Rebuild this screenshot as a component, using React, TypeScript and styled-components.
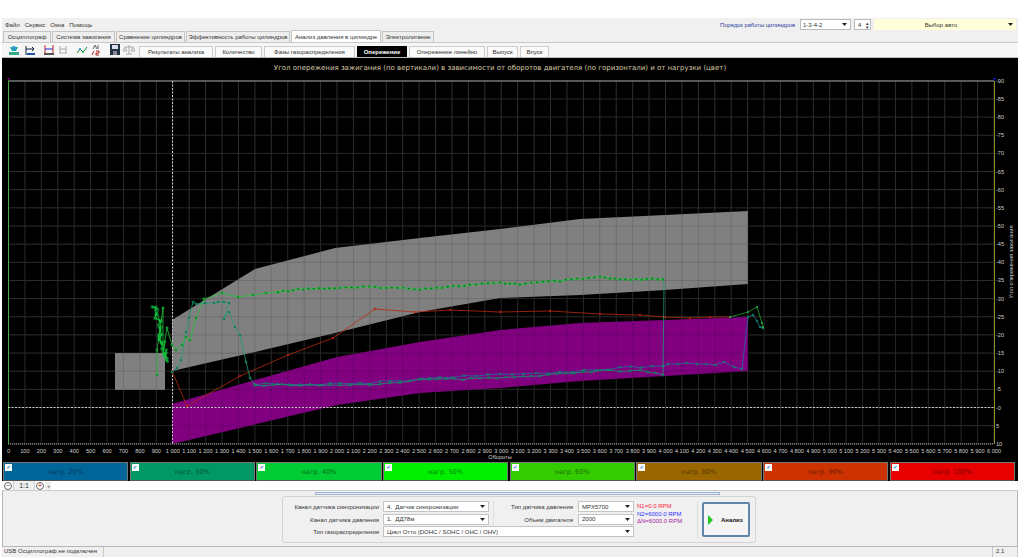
import React from "react";
import styled, { createGlobalStyle } from "styled-components";

const UI_FONT = '"Liberation Sans", Arial, sans-serif';
const WIDE_FONT = '"DejaVu Sans", Verdana, sans-serif';

// chart helpers: page coordinates are used as the svg coordinates
const xOf = (rpm: number) => 8.5 + rpm * 0.16425;
const yOf = (deg: number) => 407.5 - deg * 3.63;

type Pt = [number, number];

const toPoints = (pts: Pt[]) => pts.map((p) => p.join(",")).join(" ");

const noise = (i: number) => {
  const v = Math.sin(i * 12.9898) * 43758.5453;
  return v - Math.floor(v);
};

const interpolate = (keys: Pt[], step: number, jitter: number, seed: number) => {
  const out: Pt[] = [];
  for (let k = 0; k < keys.length - 1; k++) {
    const [x0, y0] = keys[k];
    const [x1, y1] = keys[k + 1];
    const n = Math.max(1, Math.round((x1 - x0) / step));
    for (let i = 0; i < n; i++) {
      const t = i / n;
      out.push([
        +(x0 + (x1 - x0) * t).toFixed(1),
        +(y0 + (y1 - y0) * t + (noise(seed + out.length) - 0.5) * jitter).toFixed(1),
      ]);
    }
  }
  out.push(keys[keys.length - 1]);
  return out;
};

const tangle: Pt[] = Array.from({ length: 46 }, (_, i) => [
  +(152 + i * 0.24 + noise(i) * 6).toFixed(1),
  +(308 + i * 1.2 + (noise(i + 70) - 0.5) * 10).toFixed(1),
]);

const greenHead: Pt[] = [
  [157, 375], [157, 350], [163, 308], [163, 352], [167, 328], [172, 345], [176, 350],
  [182, 345], [186, 337], [190, 340], [196, 318], [204, 299], [222, 293], [238, 297],
  [253, 295], [266, 293], [278, 292],
];
const greenTail = interpolate(
  [[278, 292], [298, 289], [340, 288], [375, 287], [420, 289], [470, 285], [500, 283], [520, 284], [560, 281], [600, 277], [620, 280], [663, 279]],
  5.5, 1.6, 11
);
const tealHead: Pt[] = [
  [172, 372], [177, 368], [181, 360], [186, 332], [189, 318], [193, 302], [196, 304],
  [205, 303], [214, 303], [218, 302], [224, 302], [229, 303], [224, 319], [229, 312],
  [235, 327], [240, 335], [246, 362], [250, 378], [255, 385],
];
const tealTail = interpolate(
  [[255, 385], [300, 385], [340, 386], [380, 384], [420, 380], [480, 379], [540, 376], [600, 371], [640, 371], [663, 375]],
  9, 2, 40
);
const blueTail = interpolate(
  [[255, 384], [300, 384], [350, 384], [400, 381], [440, 377], [500, 375], [560, 372], [620, 368], [663, 366]],
  11, 2, 90
);
const blueEnd: Pt[] = [
  [663, 366], [668, 364], [678, 364], [687, 363], [697, 364], [706, 364], [715, 365],
  [724, 362], [734, 367], [742, 369], [748, 317], [753, 315], [757, 321], [760, 327], [763, 328],
];
const tealSpike: Pt[] = [[663, 375], [664, 284], [663, 279]];
const greenEnd: Pt[] = [[730, 317], [748, 312], [757, 307], [762, 323], [763, 327]];
const redLine: Pt[] = [
  [172, 371], [187, 406], [240, 376], [288, 355], [333, 338], [375, 309], [415, 312], [450, 310],
  [500, 312], [550, 311], [600, 314], [640, 315], [664, 317], [690, 318], [710, 317], [730, 317],
];

const grayZone: Pt[] = [
  [172, 320], [255, 269], [335, 248], [420, 238], [500, 229], [580, 219], [665, 215], [748, 211],
  [748, 284], [665, 290], [580, 295], [500, 298], [420, 312], [335, 333], [255, 352], [172, 371],
];
const purpleZone: Pt[] = [
  [172, 404], [255, 380], [337, 357], [420, 342], [500, 330], [580, 323], [665, 320], [748, 317],
  [748, 371], [665, 376], [580, 381], [500, 388], [420, 393], [337, 405], [172, 444],
];

const rpmTicks = Array.from({ length: 61 }, (_, i) => i * 100);
const degTicks = Array.from({ length: 21 }, (_, i) => 90 - i * 5);
const rpmLabel = (rpm: number) =>
  rpm >= 1000 ? `${Math.floor(rpm / 1000)} ${String(rpm % 1000).padStart(3, "0")}` : String(rpm);

const loads = [
  { label: "нагр. 20%", bg: "#006699", fg: "#003a5c" },
  { label: "нагр. 30%", bg: "#009966", fg: "#00553a" },
  { label: "нагр. 40%", bg: "#00cc33", fg: "#00701c" },
  { label: "нагр. 50%", bg: "#00f000", fg: "#008a00" },
  { label: "нагр. 60%", bg: "#33cc00", fg: "#1c7000" },
  { label: "нагр. 80%", bg: "#996600", fg: "#553800" },
  { label: "нагр. 90%", bg: "#cc3300", fg: "#701c00" },
  { label: "нагр. 100%", bg: "#e60000", fg: "#800000" },
];

const mainTabs = [
  { label: "Осциллограф", w: 48 },
  { label: "Система зажигания", w: 63 },
  { label: "Сравнение цилиндров", w: 69 },
  { label: "Эффективность работы цилиндров", w: 104 },
  { label: "Анализ давления в цилиндре", w: 90, active: true },
  { label: "Электролигание", w: 52 },
];

const subTabs = [
  { label: "Результаты анализа", w: 74 },
  { label: "Количество", w: 47 },
  { label: "Фазы газораспределения", w: 91 },
  { label: "Опережение", w: 50, active: true },
  { label: "Опережение линейно", w: 76 },
  { label: "Выпуск", w: 31 },
  { label: "Впуск", w: 29 },
];

const Caret = () => (
  <CaretIcon viewBox="0 0 5 3">
    <path d="M0 0h5L2.5 3z" fill="#222" />
  </CaretIcon>
);

const Chart = () => (
  <Plot viewBox="2 78 1016 384">
    {rpmTicks.map((r) => (
      <line key={r} x1={xOf(r)} x2={xOf(r)} y1={81} y2={444} stroke="#2e2e2e" strokeWidth={1} />
    ))}
    {degTicks.map((d) => (
      <line key={d} x1={8.5} x2={994} y1={yOf(d)} y2={yOf(d)} stroke="#2e2e2e" strokeWidth={1} />
    ))}

    <rect x={115} y={353} width={50} height={37} fill="#808080" />
    <polygon points={toPoints(grayZone)} fill="#808080" />
    <polygon points={toPoints(purpleZone)} fill="#800080" />
    {rpmTicks.map((r) => (
      <line key={r} x1={xOf(r)} x2={xOf(r)} y1={210} y2={444} stroke="#000" strokeOpacity={0.13} />
    ))}
    {degTicks.map((d) => (
      <line key={d} x1={115} x2={750} y1={yOf(d)} y2={yOf(d)} stroke="#000" strokeOpacity={0.13} />
    ))}

    <line x1={8} x2={994} y1={81} y2={81} stroke="#9a9a9a" />
    <line x1={8} x2={994} y1={444} y2={444} stroke="#aaa" strokeDasharray="1 1" />
    <line x1={8.5} x2={8.5} y1={81} y2={444} stroke="#3fae3f" />
    <line x1={994.5} x2={994.5} y1={81} y2={444} stroke="#8f8f2a" />
    <line x1={172.5} x2={172.5} y1={81} y2={444} stroke="#c8c8c8" strokeDasharray="2 1.5" />
    <line x1={8} x2={994} y1={407.5} y2={407.5} stroke="#c8c8c8" strokeDasharray="2 1.5" />
    <polygon points="5,76 12,76 8.5,80" fill="#8a008a" />
    <polygon points="991,76 998,76 994.5,80" fill="#1a1aff" />

    <polyline points={toPoints(redLine)} fill="none" stroke="#b52a10" strokeWidth={0.8} />
    {redLine.map(([x, y]) => (
      <circle key={`r${x}`} cx={x} cy={y} r={0.9} fill="#e02010" />
    ))}
    <circle cx={375} cy={309} r={1.5} fill="#a03a20" />

    <polyline points={toPoints(tangle)} fill="none" stroke="#10d040" strokeWidth={0.8} />
    {tangle.map(([x, y]) => (
      <circle key={`t${x}${y}`} cx={x} cy={y} r={1.1} fill="none" stroke="#10c040" strokeWidth={0.6} />
    ))}

    <polyline points={toPoints([...blueTail, ...blueEnd])} fill="none" stroke="#1f6f9a" strokeWidth={0.8} />
    {[...blueTail, ...blueEnd].map(([x, y]) => (
      <circle key={`b${x}${y}`} cx={x} cy={y} r={1} fill="#0a5a50" stroke="#1a9a80" strokeWidth={0.5} />
    ))}

    <polyline points={toPoints([...tealHead, ...tealTail, ...tealSpike])} fill="none" stroke="#1c9a78" strokeWidth={0.8} />
    {[...tealHead, ...tealTail].map(([x, y]) => (
      <circle key={`e${x}${y}`} cx={x} cy={y} r={1.1} fill="#064a30" stroke="#20b080" strokeWidth={0.5} />
    ))}

    <polyline points={toPoints([...greenHead, ...greenTail])} fill="none" stroke="#1fc53a" strokeWidth={0.8} />
    {[...greenHead, ...greenTail].map(([x, y]) => (
      <circle key={`g${x}${y}`} cx={x} cy={y} r={1.2} fill="#0a6a20" stroke="#25d040" strokeWidth={0.5} />
    ))}
    <polyline points={toPoints(greenEnd)} fill="none" stroke="#1fa53a" strokeWidth={0.8} />
    {greenEnd.map(([x, y]) => (
      <circle key={`n${x}${y}`} cx={x} cy={y} r={0.9} fill="#20c040" />
    ))}

    {rpmTicks.map((r) => (
      <AxisText key={r} x={xOf(r)} y={452.5} textAnchor="middle">
        {rpmLabel(r)}
      </AxisText>
    ))}
    <AxisText x={500} y={459} textAnchor="middle">
      Обороты
    </AxisText>
    {degTicks.map((d) => (
      <AxisText key={d} x={996} y={yOf(d) + 2}>
        {d > 0 ? `-${d}` : d === 0 ? "-0" : `${-d}`}
      </AxisText>
    ))}
    <AxisText x={1013} y={262} textAnchor="middle" transform="rotate(-90 1013 262)">
      Угол опережения зажигания
    </AxisText>
  </Plot>
);

const TOOL_ICONS = [
  { gap: 6, w: 12, body: <><path d="M2 3h8L8 7H4z" fill="#1aa" /><circle cx="6" cy="4" r="2" fill="#39c" /><path d="M1 8h10v3H1z" fill="#3a8" /></> },
  { gap: 5, w: 11, body: <><path d="M1 2v9M1 5h8M7 3l2 2-2 2" stroke="#124" fill="none" /><path d="M2 9h8v2H2z" fill="#25a" /></> },
  { gap: 7, w: 12, body: <><path d="M2 1v8M10 1v8" stroke="#c22" /><path d="M2 5h8" stroke="#22c" /><path d="M1 9h10v2H1z" fill="#555" /></> },
  { gap: 3, w: 10, body: <path d="M2 2v7M8 2v7M1 9h8M2 5h6" stroke="#aaa" fill="none" /> },
  { gap: 8, w: 12, body: <><path d="M1 9l3-4 3 3 4-5" stroke="#184" fill="none" /><circle cx="4" cy="5" r="1" fill="#28c" /><circle cx="7" cy="8" r="1" fill="#2a4" /></> },
  { gap: 3, w: 10, body: <><path d="M2 5L4 1l2 4M7 1v4" stroke="#567" fill="none" /><path d="M1 11l2-4M5 7h3v2H5v2h3" stroke="#a22" fill="none" /></> },
  { gap: 9, w: 10, body: <><path d="M0 0h10v11H0z" fill="#234" /><path d="M2 1h6v4H2z" fill="#dde" /><path d="M3 7h4v4H3z" fill="#889" /></> },
  { gap: 3, w: 12, body: <path d="M6 1v9M2 3h8M2 3L0 7h4zM10 3L8 7h4zM3 10h6" stroke="#aaa" fill="none" /> },
];

const App = () => (
  <Page>
    <GlobalStyle />
    <TopGap />
    <MenuRow>
      <Menu>
        <span>Файл</span>
        <span>Сервис</span>
        <span>Окна</span>
        <span>Помощь</span>
      </Menu>
      <OrderLabel>Порядок работы цилиндров</OrderLabel>
      <TopSelect $w={51}>
        1-3-4-2
        <Caret />
      </TopSelect>
      <Spin>
        4<SpinArrows>▴<br />▾</SpinArrows>
      </Spin>
      <CarSelect>
        <CarText>Выбор авто</CarText>
        <Caret />
      </CarSelect>
    </MenuRow>

    <TabRow>
      {mainTabs.map((t) => (
        <MainTab key={t.label} $w={t.w} $active={!!t.active}>
          {t.label}
        </MainTab>
      ))}
    </TabRow>

    <ToolRow>
      <Tools>
        {TOOL_ICONS.map((ic, i) => (
          <ToolIcon key={i} $gap={ic.gap} width={ic.w} height={12} viewBox={`0 0 ${ic.w} 12`}>
            {ic.body}
          </ToolIcon>
        ))}
      </Tools>
      {subTabs.map((t) => (
        <SubTab key={t.label} $w={t.w} $active={!!t.active}>
          {t.label}
        </SubTab>
      ))}
    </ToolRow>

    <ChartPanel>
      <ChartTitle>
        Угол опережения зажигания (по вертикали) в зависимости от оборотов двигателя (по горизонтали) и от нагрузки (цвет)
      </ChartTitle>
      <Chart />
    </ChartPanel>

    <LoadRow>
      {loads.map((l) => (
        <LoadBar key={l.label} $bg={l.bg} $fg={l.fg}>
          <Check>✔</Check>
          {l.label}
        </LoadBar>
      ))}
    </LoadRow>

    <ZoomRow>
      <ZoomButton>−</ZoomButton>
      <ZoomValue>1:1</ZoomValue>
      <ZoomButton $plus>+</ZoomButton>
      <ZoomArrow>◂</ZoomArrow>
    </ZoomRow>

    <BottomPanel>
      <Splitter />
      <ParamBox>
        <Fields>
          <FieldLabel>Канал датчика синхронизации</FieldLabel>
          <FieldSelect>
            4.&nbsp; Датчик синхронизации
            <Caret />
          </FieldSelect>
          <FieldLabel>Канал датчика давления</FieldLabel>
          <FieldSelect>
            1.&nbsp; ДД78м
            <Caret />
          </FieldSelect>
          <FieldLabel>Тип газораспределения</FieldLabel>
          <WideSelect>
            Цикл Отто (DOHC / SOHC / OHC / OHV)
            <Caret />
          </WideSelect>
          <SensorFields>
            <FieldLabel>Тип датчика давления</FieldLabel>
            <FieldSelect>
              MPX5700
              <Caret />
            </FieldSelect>
            <FieldLabel>Объем двигателя</FieldLabel>
            <FieldSelect>
              2000
              <Caret />
            </FieldSelect>
          </SensorFields>
        </Fields>
        <Readout>
          <ReadoutLine $c="#ff2040">N1=0.0 RPM</ReadoutLine>
          <ReadoutLine $c="#3030ff">N2=6000.0 RPM</ReadoutLine>
          <ReadoutLine $c="#a020a0">ΔN=6000.0 RPM</ReadoutLine>
        </Readout>
        <AnalyzeButton>
          <PlayMark viewBox="0 0 5 10">
            <path d="M0 0l5 5-5 5z" fill="#1ecb1e" />
          </PlayMark>
          Анализ
        </AnalyzeButton>
      </ParamBox>
    </BottomPanel>

    <StatusRow>
      <StatusCell $w={102}>USB Осциллограф не подключен</StatusCell>
      <StatusCell $grow />
      <StatusCell $w={24}>2.1</StatusCell>
    </StatusRow>
  </Page>
);

export default App;

const GlobalStyle = createGlobalStyle`
  html, body {
    margin: 0;
    background: #fff;
    overflow: hidden;
  }
`;

const Page = styled.div`
  width: 1016px;
  margin-left: 2px;
  display: flex;
  flex-direction: column;
  font-family: ${UI_FONT};
  font-size: 6px;
  color: #333;
`;

const TopGap = styled.div`
  height: 18px;
`;

const MenuRow = styled.div`
  height: 13px;
  display: flex;
  align-items: center;
  background: #f0f0f0;
`;

const Menu = styled.div`
  display: flex;
  gap: 5px;
  padding-left: 3px;
  flex: 1;
`;

const OrderLabel = styled.div`
  color: #2a3f9a;
  font-size: 5.8px;
  margin-right: 5px;
`;

const CaretIcon = styled.svg`
  width: 5px;
  height: 3px;
  flex: none;
  margin-left: auto;
`;

const TopSelect = styled.div<{ $w: number }>`
  width: ${({ $w }) => $w}px;
  height: 11px;
  display: flex;
  align-items: center;
  box-sizing: border-box;
  padding: 0 3px 0 2px;
  background: #fff;
  border: 1px solid #bbb;
`;

const Spin = styled.div`
  width: 17px;
  height: 11px;
  box-sizing: border-box;
  margin-left: 3px;
  padding-left: 3px;
  display: flex;
  align-items: center;
  justify-content: space-between;
  background: #fff;
  border: 1px solid #bbb;
`;

const SpinArrows = styled.span`
  font-size: 5px;
  line-height: 4px;
  padding-right: 1px;
`;

const CarSelect = styled.div`
  width: 142px;
  height: 11px;
  margin: 0 2px 0 3px;
  padding-right: 3px;
  box-sizing: border-box;
  display: flex;
  align-items: center;
  background: #ffffd9;
`;

const CarText = styled.span`
  flex: 1;
  text-align: center;
`;

const TabRow = styled.div`
  height: 12px;
  display: flex;
  align-items: flex-end;
  background: #f0f0f0;
  padding-left: 1px;
  gap: 1px;
  border-bottom: 1px solid #c8c8c8;
  box-sizing: border-box;
`;

const MainTab = styled.div<{ $w: number; $active: boolean }>`
  width: ${({ $w }) => $w}px;
  height: ${({ $active }) => ($active ? 12 : 11)}px;
  flex: none;
  display: flex;
  align-items: center;
  justify-content: center;
  box-sizing: border-box;
  white-space: nowrap;
  font-size: 6px;
  background: ${({ $active }) => ($active ? "#fff" : "#eeeeee")};
  border: 1px solid #c4c4c4;
  border-bottom: none;
`;

const ToolRow = styled.div`
  height: 15px;
  display: flex;
  align-items: flex-end;
  background: #f6f6f6;
  gap: 2px;
  border-bottom: 1px solid #bbb;
  box-sizing: border-box;
`;

const Tools = styled.div`
  width: 135px;
  height: 14px;
  flex: none;
  display: flex;
  align-items: center;
`;

const ToolIcon = styled.svg<{ $gap: number }>`
  margin-left: ${({ $gap }) => $gap}px;
  flex: none;
`;

const SubTab = styled.div<{ $w: number; $active: boolean }>`
  width: ${({ $w }) => $w}px;
  height: 11px;
  flex: none;
  display: flex;
  align-items: center;
  justify-content: center;
  box-sizing: border-box;
  white-space: nowrap;
  background: ${({ $active }) => ($active ? "#000" : "#fafafa")};
  color: ${({ $active }) => ($active ? "#fff" : "#333")};
  font-weight: ${({ $active }) => ($active ? 700 : 400)};
  border: 1px solid ${({ $active }) => ($active ? "#000" : "#ccc")};
  border-bottom: none;
`;

const ChartPanel = styled.div`
  height: 404px;
  background: #000;
  display: flex;
  flex-direction: column;
`;

const ChartTitle = styled.div`
  height: 20px;
  display: flex;
  align-items: center;
  justify-content: center;
  font-family: ${WIDE_FONT};
  font-size: 7px;
  color: #d8c9a8;
  padding-right: 20px;
`;

const Plot = styled.svg`
  width: 1016px;
  height: 384px;
  display: block;
`;

const AxisText = styled.text`
  font-family: ${UI_FONT};
  font-size: 5.6px;
  fill: #d0d0d0;
`;

const LoadRow = styled.div`
  height: 19px;
  display: flex;
  gap: 1.5px;
  padding: 0 3px 0 1px;
  background: #000;
`;

const LoadBar = styled.div<{ $bg: string; $fg: string }>`
  flex: 1;
  position: relative;
  display: flex;
  align-items: center;
  justify-content: center;
  background: ${({ $bg }) => $bg};
  color: ${({ $fg }) => $fg};
  font-family: ${WIDE_FONT};
  font-size: 6.6px;
  border: 1px solid #777;
  border-bottom-color: #555;
  box-sizing: border-box;
`;

const Check = styled.span`
  position: absolute;
  top: 1px;
  left: 1px;
  width: 7px;
  height: 7px;
  background: #fff;
  color: #1a6fd0;
  font-size: 5px;
  line-height: 7px;
  text-align: center;
`;

const ZoomRow = styled.div`
  height: 10px;
  display: flex;
  align-items: center;
  background: #fff;
  border-bottom: 1px solid #ccc;
  box-sizing: border-box;
  padding-left: 1px;
`;

const ZoomButton = styled.div<{ $plus?: boolean }>`
  width: 8px;
  height: 8px;
  box-sizing: border-box;
  border: 1px solid #666;
  border-radius: 50%;
  font-size: 7px;
  line-height: 6px;
  text-align: center;
  color: ${({ $plus }) => ($plus ? "#c00" : "#333")};
  margin: 0 1px;
`;

const ZoomValue = styled.div`
  width: 20px;
  height: 9px;
  font-size: 7px;
  line-height: 9px;
  text-align: center;
  background: #f0f0f0;
  border: 0 solid #ccc;
  border-width: 0 1px;
`;

const ZoomArrow = styled.div`
  width: 6px;
  height: 8px;
  font-size: 5px;
  line-height: 8px;
  color: #888;
  text-align: center;
  background: #eee;
`;

const BottomPanel = styled.div`
  height: 56px;
  background: #f0f0f0;
  border: 1px solid #b5b5b5;
  border-top: none;
  box-sizing: border-box;
  display: flex;
  flex-direction: column;
  align-items: center;
`;

const Splitter = styled.div`
  width: 405px;
  height: 3px;
  margin: 1px 0 0 14px;
  box-sizing: border-box;
  background: #e8eef8;
  border: 1px solid #9db4d8;
  flex: none;
`;

const ParamBox = styled.div`
  width: 474px;
  height: 47px;
  margin: 1px 0 0 18px;
  box-sizing: border-box;
  border: 1px solid #d4d4d4;
  border-radius: 3px;
  display: flex;
  align-items: center;
`;

const Fields = styled.div`
  width: 349px;
  height: 37px;
  flex: none;
  display: grid;
  grid-template-columns: 96px 106px 1fr;
  grid-template-rows: 12px 12px 12px;
  column-gap: 4px;
  row-gap: 0.5px;
  border-right: 1px solid #ddd;
  box-sizing: border-box;
  font-size: 6px;
`;

const FieldLabel = styled.div`
  text-align: right;
  align-self: center;
  white-space: nowrap;
`;

const FieldSelect = styled.div`
  height: 11px;
  display: flex;
  align-items: center;
  box-sizing: border-box;
  background: #fff;
  border: 1px solid #c4c4c4;
  padding: 0 3px;
  white-space: nowrap;
`;

const WideSelect = styled(FieldSelect)`
  grid-column: 2 / 4;
  grid-row: 3;
  margin-right: 3px;
`;

const SensorFields = styled.div`
  grid-column: 3;
  grid-row: 1 / 3;
  display: grid;
  grid-template-columns: 79px 56px;
  grid-template-rows: 12px 12px;
  column-gap: 5px;
  row-gap: 0.5px;
  border-left: 1px solid #ddd;
  margin-right: 3px;
  justify-content: end;
`;

const Readout = styled.div`
  width: 66px;
  height: 37px;
  flex: none;
  box-sizing: border-box;
  padding: 2px 0 0 5px;
  border-right: 1px solid #ddd;
  font-size: 6px;
`;

const ReadoutLine = styled.div<{ $c: string }>`
  color: ${({ $c }) => $c};
  line-height: 7.5px;
`;

const AnalyzeButton = styled.div`
  width: 48px;
  height: 35px;
  margin-left: 4px;
  box-sizing: border-box;
  border: 2px solid #5f86a8;
  border-radius: 2px;
  background: #f4f4f4;
  display: flex;
  align-items: center;
  gap: 8px;
  padding-left: 4px;
  font-weight: 700;
  color: #111;
`;

const PlayMark = styled.svg`
  width: 5px;
  height: 10px;
  flex: none;
`;

const StatusRow = styled.div`
  height: 10px;
  display: flex;
  gap: 1px;
  background: #f0f0f0;
`;

const StatusCell = styled.div<{ $w?: number; $grow?: boolean }>`
  width: ${({ $w }) => ($w ? `${$w}px` : "auto")};
  flex: ${({ $grow }) => ($grow ? 1 : "none")};
  box-sizing: border-box;
  padding-left: 2px;
  line-height: 9px;
  border: 0 solid #c8c8c8;
  border-right-width: 1px;
  white-space: nowrap;
`;
